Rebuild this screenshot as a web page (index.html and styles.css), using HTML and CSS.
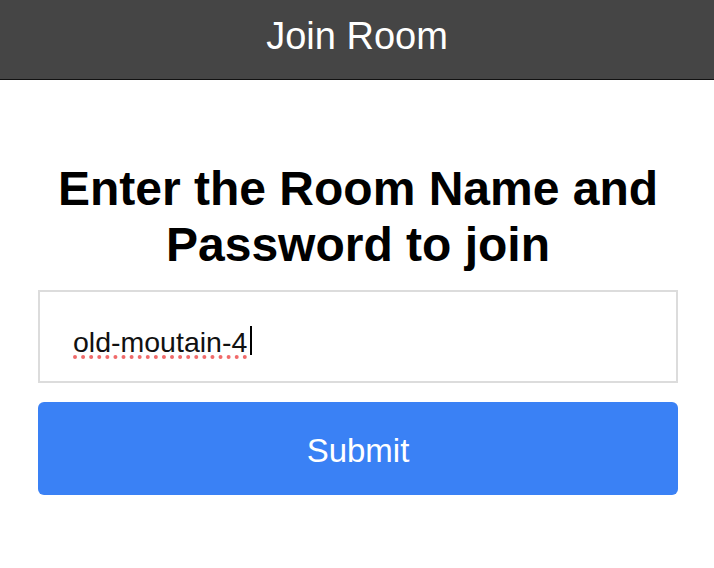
FILE: index.html
```html
<!DOCTYPE html>
<html>
<head>
<meta charset="utf-8">
<link rel="stylesheet" href="styles.css">
</head>
<body>
<header class="topbar">Join Room</header>
<main class="content">
  <h1 class="heading">Enter the Room Name and Password to join</h1>
  <div class="field"><span class="value">old-moutain-4</span><span class="caret"></span></div>
  <button class="submit" type="button">Submit</button>
</main>
</body>
</html>
```
FILE: styles.css
```css
html, body {
  margin: 0;
  padding: 0;
  background: #ffffff;
  font-family: "Liberation Sans", Arial, sans-serif;
}
.topbar {
  height: 79px;
  background: #454545;
  border-bottom: 1px solid #111111;
  color: #ffffff;
  font-size: 38px;
  line-height: 72px;
  text-align: center;
}
.content {
  padding: 81px 36px 0 38px;
  display: flex;
  flex-direction: column;
}
.heading {
  margin: 0 0 17px;
  font-size: 48px;
  line-height: 56px;
  font-weight: bold;
  text-align: center;
  color: #000000;
}
.field {
  border: 2px solid #dcdcdc;
  display: flex;
  align-items: center;
  padding: 12px 0 0 33px;
  box-sizing: border-box;
  height: 93px;
  font-size: 28.5px;
  color: #111111;
}
.value {
  text-decoration: underline dotted #f06a6a;
  text-decoration-thickness: 4px;
  text-underline-offset: 3px;
}
.caret {
  display: inline-block;
  width: 2px;
  height: 29px;
  background: #000000;
  margin-left: 3px;
  margin-top: -4px;
}
.submit {
  margin-top: 19px;
  height: 93px;
  border: none;
  border-radius: 6px;
  background: #3a81f5;
  color: #ffffff;
  font-family: "Liberation Sans", Arial, sans-serif;
  font-size: 33px;
  padding: 4px 0 0;
}
```
